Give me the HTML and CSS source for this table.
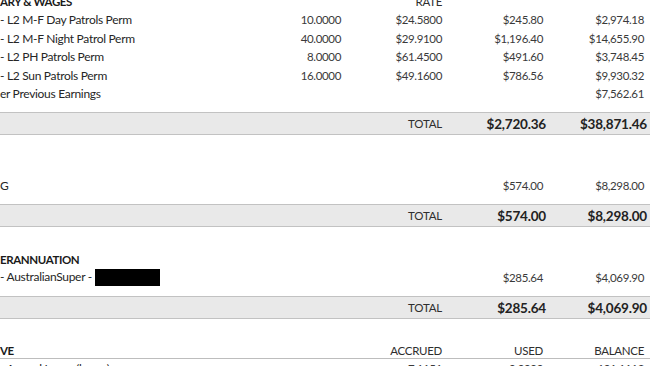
FILE: index.html
```html
<!DOCTYPE html>
<html>
<head>
<meta charset="utf-8">
<link rel="stylesheet" href="styles.css">
</head>
<body>
<div class="page">
  <section class="sec first">
    <div class="row head"><span class="lbl">ARY &amp; WAGES</span><span></span><span class="num">RATE</span><span></span><span></span></div>
    <div class="row"><span class="lbl">- L2 M-F Day Patrols Perm</span><span class="num">10.0000</span><span class="num">$24.5800</span><span class="num">$245.80</span><span class="num">$2,974.18</span></div>
    <div class="row"><span class="lbl">- L2 M-F Night Patrol Perm</span><span class="num">40.0000</span><span class="num">$29.9100</span><span class="num">$1,196.40</span><span class="num">$14,655.90</span></div>
    <div class="row"><span class="lbl">- L2 PH Patrols Perm</span><span class="num">8.0000</span><span class="num">$61.4500</span><span class="num">$491.60</span><span class="num">$3,748.45</span></div>
    <div class="row"><span class="lbl">- L2 Sun Patrols Perm</span><span class="num">16.0000</span><span class="num">$49.1600</span><span class="num">$786.56</span><span class="num">$9,930.32</span></div>
    <div class="row"><span class="lbl">er Previous Earnings</span><span></span><span></span><span></span><span class="num">$7,562.61</span></div>
    <div class="row total"><span></span><span></span><span class="num tl">TOTAL</span><span class="num big">$2,720.36</span><span class="num big">$38,871.46</span></div>
  </section>

  <section class="sec">
    <div class="row head"><span class="lbl"></span><span></span><span></span><span></span><span></span></div>
    <div class="row"><span class="lbl">G</span><span></span><span></span><span class="num">$574.00</span><span class="num">$8,298.00</span></div>
    <div class="row total"><span></span><span></span><span class="num tl">TOTAL</span><span class="num big">$574.00</span><span class="num big">$8,298.00</span></div>
  </section>

  <section class="sec">
    <div class="row head"><span class="lbl">ERANNUATION</span><span></span><span></span><span></span><span></span></div>
    <div class="row"><span class="lbl">- AustralianSuper - <span class="redact"></span></span><span></span><span></span><span class="num">$285.64</span><span class="num">$4,069.90</span></div>
    <div class="row total"><span></span><span></span><span class="num tl">TOTAL</span><span class="num big">$285.64</span><span class="num big">$4,069.90</span></div>
  </section>

  <section class="sec">
    <div class="row head lined"><span class="lbl">VE</span><span></span><span class="num">ACCRUED</span><span class="num">USED</span><span class="num">BALANCE</span></div>
    <div class="row"><span class="lbl">- Annual Leave (hours)</span><span></span><span class="num">7.1151</span><span class="num">0.0000</span><span class="num">101.1113</span></div>
  </section>
</div>
</body>
</html>
```

FILE: styles.css
```css
* { box-sizing: border-box; }
html, body {
  margin: 0;
  padding: 0;
  background: #ffffff;
  overflow: hidden;
}
body {
  width: 650px;
  height: 366px;
  font-family: "Lato", "Open Sans", sans-serif;
  font-size: 12px;
  color: #262626;
}
.page {
  padding-right: 6px;
}
.sec {
  margin-top: 23px;
}
.sec.first {
  margin-top: -8px;
}
.row {
  display: grid;
  grid-template-columns: 1fr 100px 101px 101px 101px;
  height: 18.5px;
  align-items: center;
  white-space: nowrap;
}
.lbl {
  letter-spacing: -0.3px;
}
.num {
  text-align: right;
  color: #3a3a3a;
  font-size: 11.5px;
  letter-spacing: -0.35px;
}
.head .lbl {
  font-weight: 700;
  font-size: 11.5px;
  letter-spacing: -0.4px;
  color: #1a1a1a;
}
.head .num {
  color: #2e2e2e;
  letter-spacing: -0.3px;
}
.head.lined {
  height: 17px;
  border-bottom: 1px solid #bdbdbd;
  margin-right: -6px;
  padding-right: 6px;
}
.total {
  margin-top: 9px;
  height: 23px;
  background: #e9e9e9;
  border-top: 1px solid #c2c2c2;
  border-bottom: 1px solid #c2c2c2;
  margin-right: -6px;
  padding-right: 6px;
}
.tl {
  color: #2e2e2e;
  letter-spacing: -0.2px;
}
.big {
  font-weight: 700;
  font-size: 13.5px;
  letter-spacing: -0.2px;
  color: #222222;
  margin-right: -3px;
}
.redact {
  display: inline-block;
  width: 65px;
  height: 17px;
  background: #000000;
  vertical-align: middle;
  letter-spacing: 0;
}
```
